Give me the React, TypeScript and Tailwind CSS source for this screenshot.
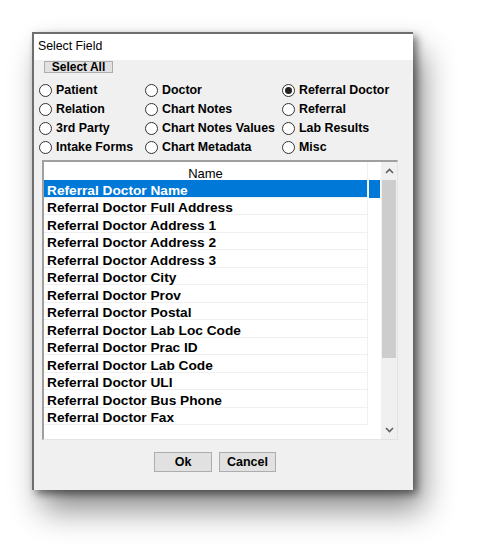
import React from 'react';

const radioOptions: { label: string; checked?: boolean }[][] = [
  [{ label: 'Patient' }, { label: 'Relation' }, { label: '3rd Party' }, { label: 'Intake Forms' }],
  [{ label: 'Doctor' }, { label: 'Chart Notes' }, { label: 'Chart Notes Values' }, { label: 'Chart Metadata' }],
  [{ label: 'Referral Doctor', checked: true }, { label: 'Referral' }, { label: 'Lab Results' }, { label: 'Misc' }],
];

const fields = [
  'Referral Doctor Name',
  'Referral Doctor Full Address',
  'Referral Doctor Address 1',
  'Referral Doctor Address 2',
  'Referral Doctor Address 3',
  'Referral Doctor City',
  'Referral Doctor Prov',
  'Referral Doctor Postal',
  'Referral Doctor Lab Loc Code',
  'Referral Doctor Prac ID',
  'Referral Doctor Lab Code',
  'Referral Doctor ULI',
  'Referral Doctor Bus Phone',
  'Referral Doctor Fax',
];

const Radio = ({ label, checked }: { label: string; checked?: boolean }) => (
  <div className="flex h-[19px] items-center">
    <span className="flex h-[13px] w-[13px] items-center justify-center rounded-full border border-[#333333] bg-white">
      {checked && <span className="h-[7px] w-[7px] rounded-full bg-[#222222]" />}
    </span>
    <span className="ml-[4px] text-[12.4px] font-bold leading-none text-black">{label}</span>
  </div>
);

const Chevron = ({ up }: { up?: boolean }) => (
  <svg width="9" height="6" viewBox="0 0 9 6">
    <polyline
      points={up ? '1,5 4.5,1.5 8,5' : '1,1 4.5,4.5 8,1'}
      fill="none"
      stroke="#606060"
      strokeWidth="1.6"
    />
  </svg>
);

export default function App() {
  return (
    <div className="min-h-[556px] w-[478px] bg-white pl-[32px] pt-[32px] font-['Liberation_Sans',Arial,sans-serif]">
      <div className="flex h-[458px] w-[381px] flex-col border-l-2 border-t-2 border-[#6e6e6e] bg-[#f0f0f0] shadow-[4px_4px_8px_rgba(0,0,0,0.5),10px_20px_30px_rgba(0,0,0,0.45)]">
        {/* title bar */}
        <div className="flex h-[26px] items-center bg-white pb-[2px] pl-[4px] text-[12.3px] text-black">
          Select Field
        </div>

        {/* select all */}
        <div className="ml-[10px] mt-[1px] flex h-[12px] w-[69px] items-center justify-center border border-[#adadad] bg-[#e1e1e1] text-[12px] font-bold leading-none text-black">
          Select All
        </div>

        {/* radio groups */}
        <div className="ml-[5px] mt-[8px] flex">
          {radioOptions.map((col, i) => (
            <div key={i} className={i === 0 ? 'w-[106px]' : i === 1 ? 'w-[137px]' : 'flex-1'}>
              {col.map((opt) => (
                <Radio key={opt.label} label={opt.label} checked={opt.checked} />
              ))}
            </div>
          ))}
        </div>

        {/* list */}
        <div className="ml-[8px] mt-[3px] flex h-[280px] w-[356px] border-b border-l-2 border-r border-t-2 border-b-[#e3e3e3] border-l-[#a0a0a0] border-r-[#e3e3e3] border-t-[#a0a0a0] bg-white">
          <div className="flex w-[337px] flex-col">
            <div className="flex h-[18px]">
              <div className="flex w-[324px] items-center justify-center border-r border-[#f0f0f0] pt-[5px] text-[13px] text-black">
                Name
              </div>
              <div className="flex-1" />
            </div>
            {fields.map((f, i) => {
              const sel = i === 0;
              return (
                <div key={f} className="flex h-[17.5px]">
                  <div
                    className={
                      sel
                        ? 'flex w-[324px] items-center border-b border-r border-[#f0f0f0] bg-[#0078d7] pl-[3px] pt-[5px] text-[13.7px] font-bold leading-none text-white'
                        : 'flex w-[324px] items-center border-b border-r border-[#f0f0f0] pl-[3px] pt-[5px] text-[13.7px] font-bold leading-none text-black'
                    }
                  >
                    {f}
                  </div>
                  <div className="flex-1 px-[1px]">
                    {sel && <div className="h-full bg-[#0078d7]" />}
                  </div>
                </div>
              );
            })}
          </div>
          <div className="flex w-[16px] flex-col bg-[#f0f0f0]">
            <div className="flex h-[18px] items-center justify-center">
              <Chevron up />
            </div>
            <div className="mx-[1px] h-[178px] bg-[#cdcdcd]" />
            <div className="flex-1" />
            <div className="flex h-[18px] items-center justify-center">
              <Chevron />
            </div>
          </div>
        </div>

        {/* buttons */}
        <div className="ml-[120px] mt-[12px] flex gap-[7px]">
          <div className="flex h-[20px] w-[58px] items-center justify-center border border-[#adadad] bg-[#e1e1e1] text-[12.5px] font-bold text-black">
            Ok
          </div>
          <div className="flex h-[20px] w-[57px] items-center justify-center border border-[#adadad] bg-[#e1e1e1] text-[12.5px] font-bold text-black">
            Cancel
          </div>
        </div>
      </div>
    </div>
  );
}
